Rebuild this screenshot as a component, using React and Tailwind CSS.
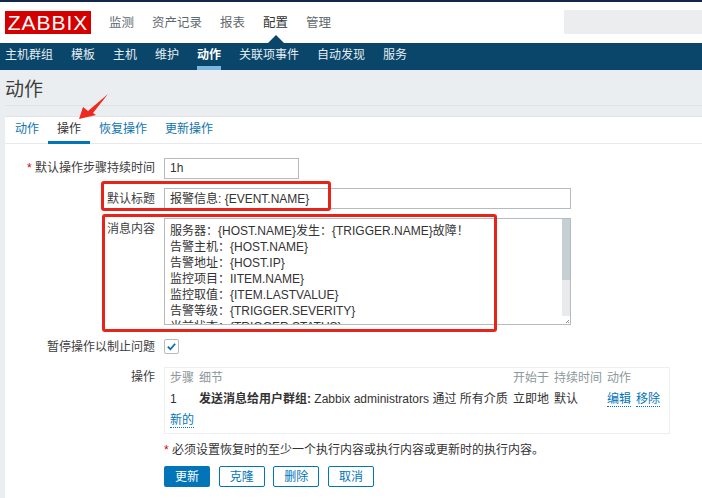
import React from 'react';

const font = { fontFamily: '"Liberation Sans", "Noto Sans CJK SC", sans-serif' };

const mainNav = ['监测', '资产记录', '报表', '配置', '管理'];
const subNav = ['主机群组', '模板', '主机', '维护', '动作', '关联项事件', '自动发现', '服务'];
const tabs = ['动作', '操作', '恢复操作', '更新操作'];
const messageLines = [
  '服务器：{HOST.NAME}发生：{TRIGGER.NAME}故障！',
  '告警主机：{HOST.NAME}',
  '告警地址：{HOST.IP}',
  '监控项目：IITEM.NAME}',
  '监控取值：{ITEM.LASTVALUE}',
  '告警等级：{TRIGGER.SEVERITY}',
  '当前状态：{TRIGGER.STATUS}',
];
const buttons = ['克隆', '删除', '取消'];

const Label = ({ children, className = '' }) => (
  <div className={`text-right text-[12px] leading-[16px] text-[#3d3d3d] ${className}`}>{children}</div>
);

const DottedLink = ({ children }) => (
  <span className="border-b border-dotted border-[#0275b8] text-[#0275b8] leading-[15px]">{children}</span>
);

const App = () => {
  return (
    <div className="relative h-[498px] w-[702px] overflow-hidden bg-[#ebeef0]" style={font}>
      <div className="h-[2px] bg-[#14264a]" />

      <header className="flex h-[41px] items-start bg-white pl-[5px]">
        <div className="mt-[9px] flex h-[23px] w-[86px] items-center justify-center bg-[#d40000] text-[21px] tracking-[1px] text-white">
          ZABBIX
        </div>
        <nav className="ml-[18px] mt-[12px] flex gap-[18px] text-[12.5px] leading-[18px] text-[#5f6a70]">
          {mainNav.map((item) => (
            <span key={item} className={item === '配置' ? 'text-[#333]' : ''}>
              {item}
            </span>
          ))}
        </nav>
        <div className="ml-auto mt-[8px] h-[24px] w-[138px] bg-[#ecedef]" />
      </header>

      <nav className="relative flex h-[27px] gap-[18px] bg-[#0a466a] pl-[5px] text-[12px] leading-[25px] text-[#e4edf2]">
        {/* little notch under the selected top menu */}
        <div className="absolute left-[268px] top-[-8px] h-0 w-0 border-x-[8px] border-b-[8px] border-x-transparent border-b-[#0a466a]" />
        {subNav.map((item) => (
          <span
            key={item}
            className={item === '动作' ? 'h-[27px] border-b-[4px] border-[#7ab8e3] font-bold text-white' : ''}
          >
            {item}
          </span>
        ))}
      </nav>

      <div className="ml-[5px] h-[36px] border-b border-[#dfe3e6] pt-[9px] text-[19px] leading-[22px] text-[#3d3d3d]">
        动作
      </div>

      <main className="ml-[5px] mt-[10px] h-[382px] border-t border-[#dfe4e7] bg-white">
        <div className="flex h-[27px] gap-[18px] border-b border-[#e6e9eb] pl-[10px] text-[12px] leading-[25px] text-[#0f75ad]">
          {tabs.map((tab) => (
            <span
              key={tab}
              className={tab === '操作' ? 'relative text-[#333]' : ''}
            >
              {tab}
              {tab === '操作' && (
                <span className="absolute bottom-[-1px] left-[-9px] right-[-9px] h-[3px] bg-[#0275b8]" />
              )}
            </span>
          ))}
        </div>

        <div className="grid grid-cols-[150px_1fr] gap-x-[9px] pt-[14px]">
          <Label className="pt-[2px]">
            <span className="text-[#dc0000]">* </span>默认操作步骤持续时间
          </Label>
          <div className="h-[21px] w-[135px] border border-[#b5bcbf] pl-[5px] text-[12px] leading-[18px] text-[#333]">
            1h
          </div>

          <Label className="mt-[9px] pt-[3px]">默认标题</Label>
          <div className="mt-[9px] h-[21px] w-[407px] border border-[#b5bcbf] pl-[5px] text-[12px] leading-[20px] text-[#333]">
            报警信息: {'{EVENT.NAME}'}
          </div>

          <Label className="mt-[9px] pt-[3px]">消息内容</Label>
          <div className="relative mt-[9px] h-[107px] w-[407px] overflow-hidden border border-[#b5bcbf] pl-[5px] pt-[4px] text-[12px] leading-[16px] text-[#333]">
            {messageLines.map((line) => (
              <div key={line} className="whitespace-nowrap">
                {line}
              </div>
            ))}
            <div className="absolute bottom-0 right-0 top-0 w-[8px] bg-[#e8eaec]">
              <div className="h-[61px] bg-[#c6d0d4]" />
            </div>
            <div className="absolute bottom-0 right-0 h-[8px] w-[8px] bg-white">
              <svg viewBox="0 0 8 8" className="h-[8px] w-[8px]">
                <path d="M4 7 7 4M6 7 7 6" stroke="#777" strokeWidth="0.8" fill="none" />
              </svg>
            </div>
          </div>

          <Label className="mt-[14px]">暂停操作以制止问题</Label>
          <div className="mt-[14px] flex h-[15px] w-[15px] items-center justify-center rounded-[2px] border border-[#b5bcbf] bg-white">
            <svg viewBox="0 0 12 12" className="h-[11px] w-[11px]">
              <path d="M2 6.2 4.8 9 10 3" stroke="#0a6ea8" strokeWidth="2" fill="none" />
            </svg>
          </div>

          <Label className="mt-[12px] pt-[2px]">操作</Label>
          <div className="mt-[12px] grid h-[67px] w-[506px] grid-cols-[29px_314px_41px_53px_1fr] content-start border border-[#eceef0] pl-[5px] text-[12px] leading-[21px] text-[#333]">
            <span className="text-[#8e979b]">步骤</span>
            <span className="text-[#8e979b]">细节</span>
            <span className="text-[#8e979b]">开始于</span>
            <span className="text-[#8e979b]">持续时间</span>
            <span className="text-[#8e979b]">动作</span>

            <span>1</span>
            <span className="whitespace-nowrap">
              <b className="font-bold">发送消息给用户群组:</b> Zabbix administrators 通过 所有介质
            </span>
            <span>立即地</span>
            <span>默认</span>
            <span className="flex gap-[5px]">
              <span><DottedLink>编辑</DottedLink></span>
              <span><DottedLink>移除</DottedLink></span>
            </span>

            <span className="col-span-5">
              <DottedLink>新的</DottedLink>
            </span>
          </div>

          <div className="col-start-2 mt-[7px] text-[12px] leading-[18px] text-[#333]">
            <span className="text-[#dc0000]">* </span>必须设置恢复时的至少一个执行内容或执行内容或更新时的执行内容。
          </div>

          <div className="col-start-2 mt-[7px] flex gap-[8.7px] text-[12px]">
            <button className="h-[21px] w-[46px] rounded-[2px] bg-[#0275b8] text-white">更新</button>
            {buttons.map((item) => (
              <button key={item} className="h-[21px] w-[46px] rounded-[2px] border border-[#0275b8] bg-white text-[#0275b8]">
                {item}
              </button>
            ))}
          </div>
        </div>
      </main>

      {/* red annotations drawn over the screenshot */}
      <div className="absolute left-[101px] top-[181px] h-[30px] w-[230px] rounded-[3px] border-[3px] border-[#e8231a]" />
      <div className="absolute left-[102px] top-[214px] h-[118px] w-[395px] rounded-[3px] border-[3px] border-[#e8231a]" />
      <svg viewBox="76 92 34 30" className="absolute left-[76px] top-[92px] h-[30px] w-[34px]">
        <path d="M79 119 83 107 88 111 108 94 93 113 96 115 Z" fill="#ee2a20" />
      </svg>
    </div>
  );
};

export default App;
